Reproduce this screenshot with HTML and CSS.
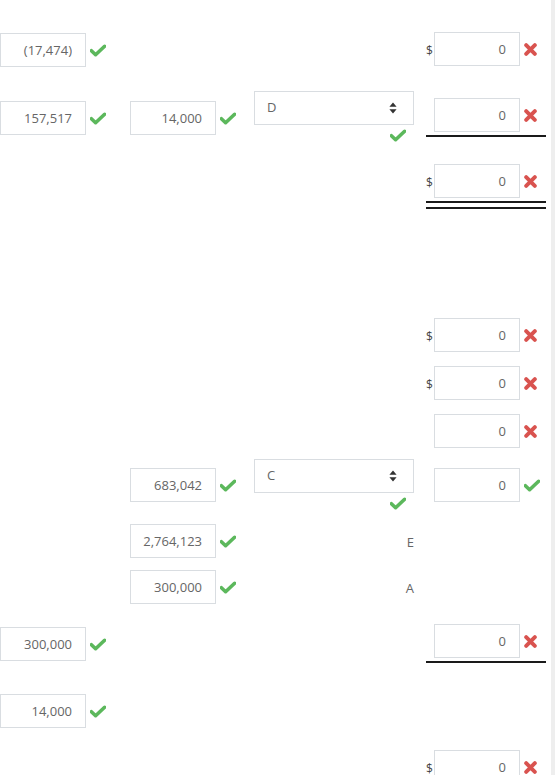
FILE: index.html
```html
<!DOCTYPE html>
<html lang="en">
<head>
    <meta charset="UTF-8">
    <meta name="viewport" content="width=device-width, initial-scale=1.0">
    <title>Worksheet</title>
    <link rel="stylesheet" href="styles.css">
</head>
<body>
    <svg width="0" height="0" class="defs">
        <symbol id="ok" viewBox="0 0 16 12">
            <path d="M1.4 6.2 L5.6 10.2 L14.6 1.8" fill="none" stroke="currentColor" stroke-width="3.6" stroke-linecap="round" stroke-linejoin="round"/>
        </symbol>
        <symbol id="bad" viewBox="0 0 12 12">
            <path d="M2 2 L10 10 M10 2 L2 10" fill="none" stroke="currentColor" stroke-width="3.6" stroke-linecap="round"/>
        </symbol>
        <symbol id="sort" viewBox="0 0 8 12">
            <path d="M4 0.5 L7.6 4.8 L0.4 4.8 Z M4 11.5 L7.6 7.2 L0.4 7.2 Z" fill="currentColor"/>
        </symbol>
    </svg>

    <div class="sheet">
        <!-- row 1 -->
        <div class="row r1">
            <div class="cell off1"><input class="field" value="(17,474)" readonly><svg class="ok"><use href="#ok"/></svg></div>
            <div class="cell"></div>
            <div class="cell"></div>
            <div class="cell amount"><span class="cur">$</span><input class="field" value="0" readonly><svg class="bad"><use href="#bad"/></svg></div>
        </div>

        <!-- row 2 -->
        <div class="row r2">
            <div class="cell off10"><input class="field" value="157,517" readonly><svg class="ok"><use href="#ok"/></svg></div>
            <div class="cell off10"><input class="field" value="14,000" readonly><svg class="ok"><use href="#ok"/></svg></div>
            <div class="cell pick">
                <div class="select"><span>D</span><svg class="sort"><use href="#sort"/></svg></div>
                <svg class="ok under"><use href="#ok"/></svg>
            </div>
            <div class="cell off7 total">
                <div class="amount"><span class="cur"></span><input class="field" value="0" readonly><svg class="bad"><use href="#bad"/></svg></div>
                <div class="rule"></div>
            </div>
        </div>

        <!-- row 3 -->
        <div class="row r3">
            <div class="cell"></div>
            <div class="cell"></div>
            <div class="cell"></div>
            <div class="cell total">
                <div class="amount"><span class="cur">$</span><input class="field" value="0" readonly><svg class="bad"><use href="#bad"/></svg></div>
                <div class="rule double"></div>
            </div>
        </div>

        <!-- rows 4 to 6 -->
        <div class="row r4">
            <div class="cell"></div><div class="cell"></div><div class="cell"></div>
            <div class="cell amount"><span class="cur">$</span><input class="field" value="0" readonly><svg class="bad"><use href="#bad"/></svg></div>
        </div>
        <div class="row r5">
            <div class="cell"></div><div class="cell"></div><div class="cell"></div>
            <div class="cell amount"><span class="cur">$</span><input class="field" value="0" readonly><svg class="bad"><use href="#bad"/></svg></div>
        </div>
        <div class="row r6">
            <div class="cell"></div><div class="cell"></div><div class="cell"></div>
            <div class="cell amount"><span class="cur"></span><input class="field" value="0" readonly><svg class="bad"><use href="#bad"/></svg></div>
        </div>

        <!-- row 7 -->
        <div class="row r7">
            <div class="cell"></div>
            <div class="cell off9"><input class="field" value="683,042" readonly><svg class="ok"><use href="#ok"/></svg></div>
            <div class="cell pick">
                <div class="select"><span>C</span><svg class="sort"><use href="#sort"/></svg></div>
                <svg class="ok under"><use href="#ok"/></svg>
            </div>
            <div class="cell off9 amount"><span class="cur"></span><input class="field" value="0" readonly><svg class="ok"><use href="#ok"/></svg></div>
        </div>

        <!-- rows 8 and 9 -->
        <div class="row r8">
            <div class="cell"></div>
            <div class="cell"><input class="field" value="2,764,123" readonly><svg class="ok"><use href="#ok"/></svg></div>
            <div class="cell letter">E</div>
            <div class="cell"></div>
        </div>
        <div class="row r9">
            <div class="cell"></div>
            <div class="cell"><input class="field" value="300,000" readonly><svg class="ok"><use href="#ok"/></svg></div>
            <div class="cell letter">A</div>
            <div class="cell"></div>
        </div>

        <!-- row 10 -->
        <div class="row r10">
            <div class="cell off3"><input class="field" value="300,000" readonly><svg class="ok"><use href="#ok"/></svg></div>
            <div class="cell"></div>
            <div class="cell"></div>
            <div class="cell total">
                <div class="amount"><span class="cur"></span><input class="field" value="0" readonly><svg class="bad"><use href="#bad"/></svg></div>
                <div class="rule"></div>
            </div>
        </div>

        <!-- row 11 -->
        <div class="row r11">
            <div class="cell"><input class="field" value="14,000" readonly><svg class="ok"><use href="#ok"/></svg></div>
            <div class="cell"></div><div class="cell"></div><div class="cell"></div>
        </div>

        <!-- row 12 -->
        <div class="row r12">
            <div class="cell"></div><div class="cell"></div><div class="cell"></div>
            <div class="cell amount"><span class="cur">$</span><input class="field" value="0" readonly><svg class="bad"><use href="#bad"/></svg></div>
        </div>
    </div>
</body>
</html>
```

FILE: styles.css
```css
body {
    font-family: 'Open Sans', 'Liberation Sans', sans-serif;
    font-size: 13px;
    color: #666;
    margin: 0;
    background: #fff;
    overflow: hidden;
}

.defs {
    position: absolute;
}

.sheet {
    width: 555px;
    min-height: 100vh;
    padding-top: 32px;
    border-right: 4px solid #eeeeee;
    box-sizing: border-box;
}

.row {
    display: grid;
    grid-template-columns: 130px 124px 172px 125px;
    align-items: start;
}

.r1 { height: 59px; }
.r2 { height: 73px; }
.r3 { height: 154px; }
.r4 { height: 48px; }
.r5 { height: 48px; }
.r6 { height: 45px; }
.r7 { height: 65px; }
.r8 { height: 46px; }
.r9 { height: 54px; }
.r10 { height: 70px; }
.r11 { height: 56px; }

.cell {
    display: flex;
    align-items: center;
}

.off1 { padding-top: 1px; }
.off3 { padding-top: 3px; }
.off7 { padding-top: 7px; }
.off9 { padding-top: 9px; }
.off10 { padding-top: 10px; }

.field {
    width: 86px;
    height: 34px;
    padding: 0 13px 0 4px;
    border: 1px solid #d9dde1;
    border-radius: 0;
    box-sizing: border-box;
    font-family: inherit;
    font-size: 13px;
    color: #666;
    text-align: right;
    background: #fff;
    outline: none;
}

.ok {
    width: 16px;
    height: 13px;
    margin-left: 4px;
    color: #5cb85c;
}

.bad {
    width: 13px;
    height: 13px;
    margin-left: 4px;
    color: #d9534f;
}

/* currency column */
.amount {
    display: flex;
    align-items: center;
}

.cur {
    width: 8px;
    font-size: 12px;
    color: #444;
    padding-top: 2px;
}

.total {
    flex-direction: column;
    align-items: flex-start;
}

.rule {
    width: 120px;
    margin-top: 3px;
    border-top: 2px solid #1a1a1a;
}

.rule.double {
    height: 4px;
    border-bottom: 2px solid #1a1a1a;
}

/* dropdowns */
.pick {
    flex-direction: column;
    align-items: flex-start;
}

.select {
    width: 160px;
    height: 34px;
    padding: 0 12px 2px 12px;
    border: 1px solid #d9dde1;
    box-sizing: border-box;
    display: flex;
    align-items: center;
    justify-content: space-between;
    font-size: 13px;
    color: #666;
}

.sort {
    width: 8px;
    height: 12px;
    margin-top: 2px;
    margin-right: 4px;
    color: #333;
}

.ok.under {
    margin: 4px 0 0 136px;
}

.letter {
    width: 160px;
    justify-content: flex-end;
    padding-top: 9px;
    padding-right: 0;
    box-sizing: border-box;
}
```
